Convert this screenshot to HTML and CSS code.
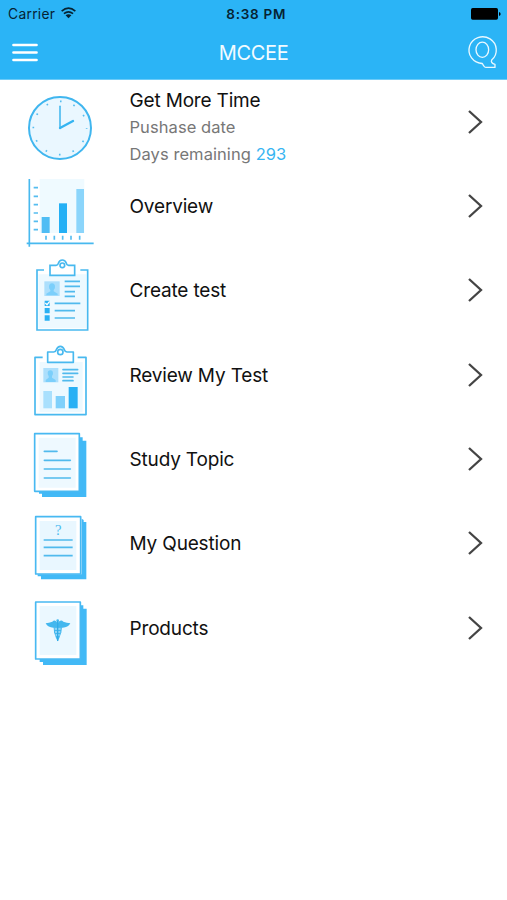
FILE: index.html
```html
<!DOCTYPE html>
<html lang="en">
<head>
<meta charset="utf-8">
<title>MCCEE</title>
<link rel="stylesheet" href="styles.css">
</head>
<body>
<header class="header">
  <div class="status">
    <div class="carrier"><span>Carrier</span>
      <svg class="wifi" viewBox="0 0 46 36"><path d="M2 12Q23-6 44 12M9 20Q23 9 37 20" fill="none" stroke="#062333" stroke-width="5"/><path d="M14 25Q23 19 32 25L23 34Z" fill="#062333"/></svg>
    </div>
    <span class="time">8:38 PM</span>
    <svg class="battery" viewBox="0 0 90 36"><rect width="81" height="35" rx="5"/><path d="M84 12q5 1 5 6t-5 6z"/></svg>
  </div>
  <nav class="nav">
    <svg class="menu" viewBox="0 0 26 20"><path d="M1.5 2H24.5M1.5 9.5H24.5M1.5 17H24.5" fill="none" stroke="#fff" stroke-width="2.7" stroke-linecap="round"/></svg>
    <h1 class="title">MCCEE</h1>
    <svg class="logo" viewBox="0 2.6 90 100"><g fill="none" stroke="#e9f8ff" stroke-width="4" stroke-linejoin="round"><path d="M46 85A41 40 0 1 1 74 75Q70 83 84 88V97H57Q52 97 46 85Q36 86 26 80"/><ellipse cx="46" cy="44" rx="19" ry="23"/></g></svg>
  </nav>
</header>
<main class="list">
  <section class="row">
    <svg class="icon" viewBox="-14 -16 270 253"><circle cx="121" cy="128" r="93" fill="#eaf7ff" stroke="#40b6ef" stroke-width="6"/><circle cx="121" cy="128" r="80" fill="none" stroke="#55bdf0" stroke-width="5" stroke-dasharray="5 36.888" stroke-dashoffset="2.5"/><path d="M121 63V128" stroke="#4dbbf0" stroke-width="5" stroke-linecap="round"/><path d="M121 128L160 107" stroke="#35b4f1" stroke-width="7" stroke-linecap="round"/></svg>
    <div class="text more"><h2>Get More Time</h2><p class="date">Pushase date</p><p class="days">Days remaining <b>293</b></p></div>
    <svg class="chevron" viewBox="0 0 16 26"><path d="M2 2L14 13L2 24"/></svg>
  </section>
  <section class="row">
    <svg class="icon" viewBox="-14 -18 270 253"><path d="M60 27H194V189H60Z" fill="#effaff"/><path d="M66 141H90V189H66Z" fill="#4fbdf4"/><path d="M118 100H142V189H118Z" fill="#24b0f5"/><path d="M170 57H193V189H170Z" fill="#8bd5fb"/><path d="M29 27V230M21 220H222" fill="none" stroke="#48b9ef" stroke-width="5"/><path d="M42 53H55M42 79H55M42 104H55M42 129H55M42 154H55M42 179H55M79 197V209M104 197V209M129 197V209M154 197V209M180 197V209" stroke="#55bdf0" stroke-width="5"/></svg>
    <div class="text"><h2>Overview</h2></div>
    <svg class="chevron" viewBox="0 0 16 26"><path d="M2 2L14 13L2 24"/></svg>
  </section>
  <section class="row">
    <svg class="icon" viewBox="-14 -17 270 253"><path d="M56 62H200V224H56Z" fill="#edf9ff"/><g fill="none" stroke="#48b9ef" stroke-width="5"><path d="M73 49H52V229H204V49H182"/><path d="M91 65V35H109Q115 34 116 29Q119 19 128 19Q137 19 140 29Q141 34 147 35H165V65Z" fill="#fff"/><circle cx="128" cy="35" r="7"/></g><path d="M74 83H120V127H74Z" fill="#acdffc"/><path d="M80 125V120L92 113V109Q88 106 88 100Q88 89 97 89Q106 89 106 100Q106 106 102 109V113L114 120V125Z" fill="#7bcffb"/><path d="M135 83H181M135 98H181M135 114H166M135 128H166M105 149H182M105 171H166M105 193H166" stroke="#50baed" stroke-width="5"/><path d="M75 141H90V157H75ZM75 163H90V179H75ZM75 185H90V201H75Z" fill="#2ab1f3"/><path d="M77 148L82 153L90 143" fill="none" stroke="#fff" stroke-width="4"/></svg>
    <div class="text"><h2>Create test</h2></div>
    <svg class="chevron" viewBox="0 0 16 26"><path d="M2 2L14 13L2 24"/></svg>
  </section>
  <section class="row">
    <svg class="icon" viewBox="-14 -16 270 253"><path d="M60 71H189V222H60Z" fill="#edf9ff"/><g fill="none" stroke="#48b9ef" stroke-width="5" stroke-linejoin="round"><path d="M69 57H46V229H199V57H174"/><path d="M84 72V41H102Q108 40 110 34Q114 24 122 24Q130 24 134 34Q136 40 142 41H161V72Z" fill="#fff"/><circle cx="122" cy="41" r="8"/></g><path d="M71 89H116V132H71Z" fill="#acdffc"/><path d="M78 131V125L87 118V113Q84 110 84 105Q84 96 92 96Q100 96 100 105Q100 110 97 113V118L108 125V131Z" fill="#7bcffb"/><path d="M130 94H174M130 105H174M130 116H160M130 127H160" stroke="#50baed" stroke-width="5" stroke-linecap="round"/><path d="M71 158H97V210H71Z" fill="#a9e0fd"/><path d="M108 173H136V210H108Z" fill="#7fd0fb"/><path d="M147 146H174V210H147Z" fill="#29b0f4"/></svg>
    <div class="text"><h2>Review My Test</h2></div>
    <svg class="chevron" viewBox="0 0 16 26"><path d="M2 2L14 13L2 24"/></svg>
  </section>
  <section class="row">
    <svg class="icon" viewBox="-14 -18 270 253"><path d="M67 53H200V222H67Z" fill="#42b9f6"/><path d="M58 43H189V212H58Z" fill="#42b9f6"/><path d="M45 32H179V205H45Z" fill="#fff" stroke="#48b9f2" stroke-width="5" stroke-linejoin="round"/><path d="M57 44H168V194H57Z" fill="#eef9ff"/><path d="M74 85H112M74 112H152M74 138H152M74 165H152" stroke="#50baed" stroke-width="5" stroke-linecap="round"/></svg>
    <div class="text"><h2>Study Topic</h2></div>
    <svg class="chevron" viewBox="0 0 16 26"><path d="M2 2L14 13L2 24"/></svg>
  </section>
  <section class="row">
    <svg class="icon" viewBox="-14 -17 270 253"><path d="M186 36L192 40V46H200V218H64V209H54V203H186Z" fill="#42b9f6"/><path d="M48 30H183V202H48Z" fill="#fff" stroke="#48b9f2" stroke-width="5" stroke-linejoin="round"/><path d="M60 43H170V190H60Z" fill="#e9f7ff"/><path d="M72 100H159M72 122H159M72 147H159" stroke="#50baed" stroke-width="5"/><text class="question" x="116" y="85" text-anchor="middle">?</text></svg>
    <div class="text"><h2>My Question</h2></div>
    <svg class="chevron" viewBox="0 0 16 26"><path d="M2 2L14 13L2 24"/></svg>
  </section>
  <section class="row">
    <svg class="icon" viewBox="-14 -19 270 253"><path d="M70 49H201V218H70Z" fill="#42b9f6"/><path d="M60 39H191V209H60Z" fill="#42b9f6"/><path d="M48 29H182V200H48Z" fill="#fff" stroke="#48b9f2" stroke-width="5" stroke-linejoin="round"/><path d="M60 41H170V188H60Z" fill="#ebf8ff"/><g fill="#43b7ee"><path d="M78 93Q88 92 98 88Q104 82 109 87L114 92L119 87Q125 82 131 88Q141 92 152 93Q145 106 129 106H101Q85 106 78 93Z"/><circle cx="114" cy="85" r="4"/><path d="M102 105H127L125 120L119 137L114 147L109 137L103 120Z"/></g><path d="M105 110H123M106 119H122M108 128H120" stroke="#d6f0ff" stroke-width="3"/><path d="M114 86V146" stroke="#32ace7" stroke-width="4"/></svg>
    <div class="text"><h2>Products</h2></div>
    <svg class="chevron" viewBox="0 0 16 26"><path d="M2 2L14 13L2 24"/></svg>
  </section>
</main>
</body>
</html>
```
FILE: styles.css
```css
* { box-sizing: border-box; }
body { margin: 0; height: 900px; background: #fff; color: #111; font-family: Inter, "Liberation Sans", sans-serif; overflow: hidden; }
h1, h2, p { margin: 0; font-weight: 400; }
svg { display: block; }
.header { height: 79.67px; background: #2bb4f6; border-bottom: 1px solid #6ccbf8; }
.status { height: 27px; display: grid; grid-template-columns: 1fr auto 1fr; align-items: center; padding: 1px 6.5px 0 8px; color: #062333; }
.carrier { display: flex; align-items: center; gap: 6px; font-size: 13.8px; letter-spacing: 0.3px; }
.wifi { width: 15px; height: 12px; margin-top: -2px; }
.time { font-size: 13.5px; font-weight: 600; letter-spacing: 0.75px; margin-left: 4px; }
.battery { width: 30px; height: 12px; justify-self: end; fill: #000; }
.nav { height: 51px; display: grid; grid-template-columns: 1fr auto 1fr; align-items: center; padding: 0 9.7px 0 12px; }
.menu { width: 26px; height: 20px; }
.title { color: #f2fbff; font-size: 20px; line-height: 24px; letter-spacing: -0.3px; margin-right: 2px; }
.logo { width: 30px; height: 33.3px; justify-self: end; overflow: visible; }
.row { height: 84.33px; display: flex; align-items: center; padding: 0 24px 0 15px; }
.icon { width: 90px; height: 84.33px; flex: none; }
.text { flex: 1; margin-left: 24.5px; padding-top: 0.7px; }
.more { padding-top: 11px; }
.text h2 { font-size: 19px; line-height: 27px; letter-spacing: -0.17px; }
.text p { color: #777; font-size: 16.5px; line-height: 26.5px; letter-spacing: 0.07px; }
.text b { color: #38b5f2; font-weight: 400; }
.chevron { width: 16px; height: 26px; flex: none; }
.chevron path { fill: none; stroke: #444; stroke-width: 2.3; }
.question { font: 44px "Liberation Serif", serif; fill: #4dbbf0; }
```
